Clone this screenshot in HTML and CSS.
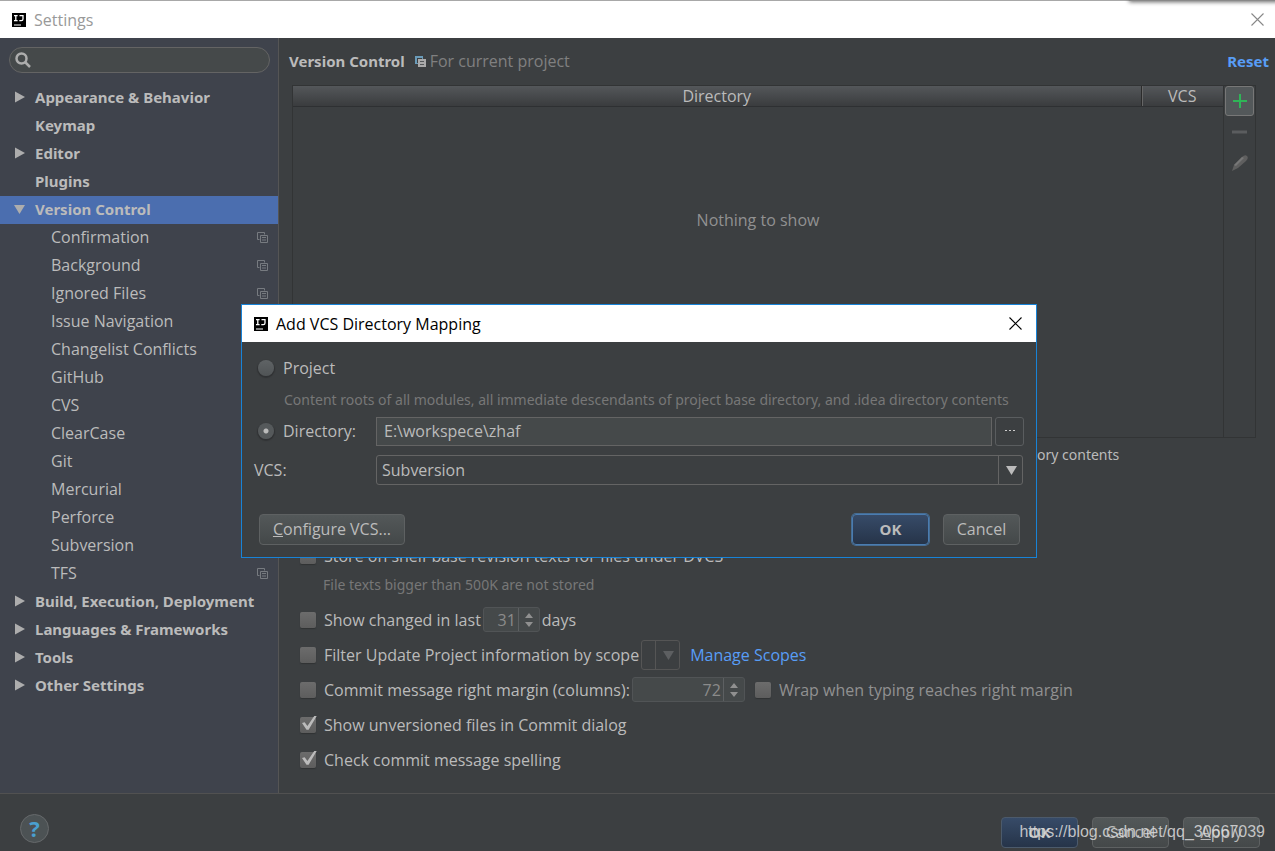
FILE: index.html
```html
<!DOCTYPE html>
<html lang="en">
<head>
<meta charset="utf-8">
<title>Settings</title>
<link rel="stylesheet" href="styles.css">
</head>
<body>
<svg class="defs" aria-hidden="true">
  <symbol id="logo" viewBox="0 0 14 14"><path fill="#000" d="M0 0h14v14H0z"/><path fill="none" stroke="#fff" stroke-width="1.3" d="M2 2.600h3.600M3.800 2.600v5M2 7.700h3.600M7.500 2.600h3.500v3.400q0 1.700-1.700 1.700H7.300"/><path fill="#fff" d="M2 11.500h7v1H2z"/></symbol>
  <symbol id="copy" viewBox="0 0 11 11"><path fill="none" stroke="currentColor" d="M2.500 7.500h-2v-7h7v2M3.500 3.500h7v7h-7zM5 5.500h4M5 8h4"/></symbol>
  <symbol id="close" viewBox="0 0 13 13"><path fill="none" stroke="currentColor" stroke-width="1.100" d="M.5.5l12 12M12.500.5l-12 12"/></symbol>
  <symbol id="right" viewBox="0 0 10 12"><path fill="currentColor" d="M0 .5v11L10 6z"/></symbol>
  <symbol id="down" viewBox="0 0 11 9"><path fill="currentColor" d="M0 0h11L5.500 9z"/></symbol>
  <symbol id="steps" viewBox="0 0 8 14"><path fill="currentColor" d="M4 0l4 5H0zM4 14l4-5H0z"/></symbol>
</svg>
<div class="window">
  <header class="titlebar">
    <svg class="logo"><use href="#logo"/></svg>
    <span class="title">Settings</span>
    <button class="close" aria-label="Close"><svg><use href="#close"/></svg></button>
    <span class="edge"></span>
  </header>
  <div class="content">
    <nav class="sidebar">
      <label class="search">
        <svg viewBox="0 0 16 16"><circle cx="6.500" cy="6.500" r="5"/><path d="M10 10l5 5"/></svg>
        <input type="text" aria-label="Search settings">
      </label>
      <ul class="tree">
        <li class="group"><svg class="arrow"><use href="#right"/></svg>Appearance &amp; Behavior</li>
        <li class="group">Keymap</li>
        <li class="group"><svg class="arrow"><use href="#right"/></svg>Editor</li>
        <li class="group">Plugins</li>
        <li class="group selected"><svg class="arrow open"><use href="#down"/></svg>Version Control</li>
        <li>Confirmation<svg class="copy"><use href="#copy"/></svg></li>
        <li>Background<svg class="copy"><use href="#copy"/></svg></li>
        <li>Ignored Files<svg class="copy"><use href="#copy"/></svg></li>
        <li>Issue Navigation</li>
        <li>Changelist Conflicts</li>
        <li>GitHub</li>
        <li>CVS</li>
        <li>ClearCase</li>
        <li>Git</li>
        <li>Mercurial</li>
        <li>Perforce</li>
        <li>Subversion</li>
        <li>TFS<svg class="copy"><use href="#copy"/></svg></li>
        <li class="group"><svg class="arrow"><use href="#right"/></svg>Build, Execution, Deployment</li>
        <li class="group"><svg class="arrow"><use href="#right"/></svg>Languages &amp; Frameworks</li>
        <li class="group"><svg class="arrow"><use href="#right"/></svg>Tools</li>
        <li class="group"><svg class="arrow"><use href="#right"/></svg>Other Settings</li>
      </ul>
    </nav>
    <main class="main">
      <div class="heading">
        <h1>Version Control</h1>
        <svg class="scope" viewBox="0 0 11 11"><path fill="#6a9bb8" d="M0 0h8v8H0z"/><path fill="#3c3f41" d="M2 2h5v5H2z"/><path fill="#aaa" d="M3 3h8v8H3z"/><path stroke="#55585a" d="M5 5.500h4M5 8.500h4"/></svg>
        <span class="muted">For current project</span>
        <a class="reset" href="#">Reset</a>
      </div>
      <div class="mappings">
        <div class="list">
          <table>
            <thead><tr><th>Directory</th><th class="vcs">VCS</th></tr></thead>
          </table>
          <p class="empty">Nothing to show</p>
        </div>
        <div class="tools">
          <button class="add" aria-label="Add"><svg viewBox="0 0 16 16"><path stroke="#2fb457" stroke-width="2" d="M8 1v14M1 8h14"/></svg></button>
          <button aria-label="Remove"><svg viewBox="0 0 16 16"><path stroke="#5b5d5f" stroke-width="3" d="M0 8h15"/></svg></button>
          <button aria-label="Edit"><svg viewBox="0 0 16 16"><path fill="#5f5f5f" d="M0 16l2-6 8-8q3-3 5-1t-1 5l-8 7z"/><path fill="#777" d="M2 10l8-8 2 1-8 8z"/></svg></button>
        </div>
      </div>
      <p class="note">&lt;Project&gt; - Content roots of all modules, all immediate descendants of project base directory, and .idea directory contents</p>
      <div class="options">
        <div class="option"><label><input type="checkbox">Store on shelf base revision texts for files under DVCS</label></div>
        <p class="hint">File texts bigger than 500K are not stored</p>
        <div class="option"><label><input type="checkbox">Show changed in last</label>
          <span class="spinner"><input type="number" value="31" aria-label="Days" disabled><svg><use href="#steps"/></svg></span><span>days</span></div>
        <div class="option"><label><input type="checkbox">Filter Update Project information by scope</label>
          <span class="combo mini"><select aria-label="Scope" disabled><option></option></select><svg><use href="#down"/></svg></span>
          <a class="manage" href="#">Manage Scopes</a></div>
        <div class="option"><label><input type="checkbox">Commit message right margin (columns):</label>
          <span class="spinner wide"><input type="number" value="72" aria-label="Right margin columns" disabled><svg><use href="#steps"/></svg></span>
          <label class="wrap"><input type="checkbox" disabled>Wrap when typing reaches right margin</label></div>
        <div class="option"><label><input type="checkbox" checked>Show unversioned files in Commit dialog</label></div>
        <div class="option"><label><input type="checkbox" checked>Check commit message spelling</label></div>
      </div>
    </main>
  </div>
  <footer class="footer">
    <button class="help" aria-label="Help">?</button>
    <button class="btn primary">OK</button>
    <button class="btn">Cancel</button>
    <button class="btn"><u>A</u>pply</button>
    <span class="watermark">https://blog.csdn.net/qq_30667039</span>
  </footer>

  <section class="dialog" role="dialog" aria-labelledby="dialog-title">
    <header class="titlebar">
      <svg class="logo"><use href="#logo"/></svg>
      <span class="title" id="dialog-title">Add VCS Directory Mapping</span>
      <button class="close" aria-label="Close"><svg><use href="#close"/></svg></button>
    </header>
    <form class="form">
      <label class="choice"><input type="radio" name="target">Project</label>
      <p class="roots">Content roots of all modules, all immediate descendants of project base directory, and .idea directory contents</p>
      <div class="field">
        <label class="choice"><input type="radio" name="target" checked>Directory:</label>
        <input class="path" type="text" value="E:\workspece\zhaf" aria-label="Directory path">
        <button class="browse" type="button" aria-label="Browse"><svg viewBox="0 0 10 2"><path fill="#ccc" d="M0 0h2v1H0zM4 0h2v1H4zM8 0h2v1H8z"/></svg></button>
      </div>
      <div class="field vcs-field">
        <label for="vcs">VCS:</label>
        <span class="combo"><select id="vcs"><option>Subversion</option></select><svg><use href="#down"/></svg></span>
      </div>
      <div class="actions">
        <button class="btn configure" type="button"><u>C</u>onfigure VCS...</button>
        <button class="btn primary focused" type="button">OK</button>
        <button class="btn" type="button">Cancel</button>
      </div>
    </form>
  </section>
</div>
</body>
</html>
```

FILE: styles.css
```css
* { box-sizing: border-box; }

body {
  margin: 0;
  background: #3c3f41;
  color: #bbb;
  font: 16px/20px "Open Sans", "Noto Sans", sans-serif;
}

h1, p, ul { margin: 0; padding: 0; }
h1 { font: 700 15px/20px "Noto Sans", sans-serif; }
button, input, select { font: inherit; color: inherit; margin: 0; }
button { padding: 0; border: 0; background: none; }
a { color: #589df6; text-decoration: none; }
svg { display: block; flex: none; }
.defs { display: none; }

.window {
  position: relative;
  display: flex;
  flex-direction: column;
  min-height: 100vh;
  overflow: hidden;
}

.titlebar {
  position: relative;
  display: flex;
  align-items: center;
  height: 38px;
  padding: 0 11px 0 12px;
  border-top: 1px solid #a8a8a8;
  background: #fff;
  color: #999;
}
.logo { width: 14px; height: 14px; }
.title { margin-left: 8px; }
.close { margin-left: auto; color: #888; }
.close svg { width: 13px; height: 13px; }
.edge {
  position: absolute;
  top: -6px;
  right: -8px;
  width: 154px;
  height: 6px;
  background: #888;
  box-shadow: 0 1px 4px #666;
}

.content { display: flex; flex: 1; }

.sidebar {
  width: 279px;
  flex: none;
  border-right: 1px solid #555;
  background: #3f434c;
}
.search {
  display: flex;
  align-items: center;
  height: 26px;
  margin: 9px 8px 11px 9px;
  padding: 0 5px;
  border: 1px solid #646464;
  border-radius: 13px;
  background: #45494a;
}
.search svg { width: 16px; height: 16px; fill: none; stroke: #adadad; stroke-width: 2.5; }
.search input { flex: 1; min-width: 0; border: 0; background: none; outline: 0; }

.tree { list-style: none; }
.tree li {
  position: relative;
  display: flex;
  align-items: center;
  height: 28px;
  padding: 0 0 2px 51px;
}
.tree .group { padding-left: 35px; font: 700 15px/20px "Noto Sans", sans-serif; }
.tree .selected { background: #4b6eaf; }
.arrow { position: absolute; left: 15px; width: 10px; height: 12px; color: #adadad; }
.arrow.open { left: 14px; width: 11px; height: 9px; }
.copy { width: 11px; height: 11px; margin: 0 10px 0 auto; color: #777b80; }

.main { flex: 1; min-width: 0; padding: 0 6px 0 10px; }
.heading { display: flex; align-items: center; height: 46px; margin-bottom: 1px; }
.scope { width: 11px; height: 11px; margin: 0 4px 0 10px; }
.muted { color: #808080; }
.reset { margin-left: auto; font: 700 15px/20px "Noto Sans", sans-serif; }

.mappings {
  display: flex;
  height: 353px;
  margin: 0 13px 0 3px;
  border: 1px solid #323435;
}
.list { flex: 1; }
.list table { width: 100%; border-collapse: collapse; }
.list th {
  height: 20px;
  padding: 0;
  border-bottom: 1px solid #2e3032;
  background: linear-gradient(#54575a, #3a3c3e);
  font-weight: 400;
}
.list .vcs { width: 82px; border-left: 1px solid #2b2b2b; box-shadow: inset 1px 0 #666; }
.empty { padding-top: 103px; text-align: center; color: #919191; }
.tools {
  display: flex;
  flex-direction: column;
  align-items: center;
  width: 32px;
  border-left: 1px solid #323435;
}
.tools button { display: grid; place-items: center; width: 29px; height: 31px; }
.tools svg { width: 16px; height: 16px; }
.tools .add { height: 30px; border: 1px solid #777; border-radius: 3px; background: #53585a; }

.note {
  padding: 7px 0 0 32px;
  font-family: "Noto Sans", sans-serif;
  font-size: 14px;
  white-space: nowrap;
}
.options { padding: 73px 0 0 11px; }
.option { display: flex; align-items: center; height: 35px; white-space: nowrap; }
.option label { display: flex; align-items: center; gap: 8px; }
.options .hint {
  padding: 2px 0 7px 23px;
  font-family: "Noto Sans", sans-serif;
  font-size: 14px;
  color: #777;
}

input[type="checkbox"] {
  appearance: none;
  position: relative;
  width: 16px;
  height: 16px;
  border-radius: 2px;
  background: linear-gradient(#6c6c6c, #5d5d5d);
  box-shadow: 0 1px 1px #303234;
}
input[type="checkbox"]:checked::before {
  content: "";
  position: absolute;
  top: -1px;
  left: 2px;
  width: 15px;
  height: 15px;
  background: #bbb;
  clip-path: polygon(0 50%, 18% 45%, 36% 70%, 84% 0, 100% 0, 44% 95%, 30% 95%);
}

input::-webkit-inner-spin-button { display: none; }
.spinner {
  display: flex;
  align-items: center;
  width: 57px;
  height: 25px;
  margin: 0 2px;
  border: 1px solid #515456;
  border-radius: 3px;
  background: #45494a;
  color: #8b8b8b;
}
.spinner input {
  appearance: textfield;
  width: 35px;
  height: 23px;
  padding: 0 2px 0 0;
  border: 0;
  border-right: 1px solid #5d6062;
  background: none;
  text-align: right;
}
.spinner svg { width: 8px; height: 14px; margin: auto; color: #909090; }
.spinner.wide { width: 113px; margin-right: 10px; }
.spinner.wide input { width: 91px; }
.wrap { color: #919191; }

.combo { position: relative; display: flex; flex: 1; }
.combo select {
  appearance: none;
  width: 100%;
  height: 30px;
  padding: 0 26px 0 5px;
  border: 1px solid #646464;
  border-radius: 3px;
  background: linear-gradient(#646464, #646464) right 23px top / 1px 100% no-repeat;
}
.combo svg { position: absolute; top: 11px; right: 6px; width: 11px; height: 9px; color: #bbb; pointer-events: none; }
.combo.mini { flex: none; width: 39px; margin-left: 2px; }
.combo.mini select { border-color: #555; background-image: linear-gradient(#555, #555); opacity: 1; }
.combo.mini svg { color: #5d5f61; }
.manage { margin-left: 10px; }

.footer {
  position: relative;
  display: flex;
  align-items: center;
  gap: 14px;
  height: 58px;
  padding: 20px 15px 0 20px;
  border-top: 1px solid #515151;
}
.help {
  width: 29px;
  height: 29px;
  margin: -9px auto 0 0;
  border: 1px solid #66696b;
  border-radius: 50%;
  background: #4c5254;
  color: #4a9fcf;
  font-size: 22px;
  line-height: 24px;
  font-weight: 700;
}
.btn {
  width: 77px;
  height: 31px;
  padding-bottom: 1px;
  border: 1px solid #5e6162;
  border-radius: 4px;
  background: linear-gradient(#535859, #444849);
}
.btn.primary {
  border-color: #4c5a6b;
  background: linear-gradient(#374b68, #263449);
  font: 700 15px/20px "Noto Sans", sans-serif;
}
.btn.focused { border-color: #4a7cb0; box-shadow: 0 0 0 1px #466d94; }
.watermark {
  position: absolute;
  right: 10px;
  bottom: 9px;
  font: 16px/20px "Liberation Sans", Arial, sans-serif;
  color: rgba(220, 220, 220, 0.85);
}

/* Dialog floating over the settings window */
.dialog {
  position: absolute;
  top: 304px;
  left: 241px;
  width: 796px;
  border: 1px solid #1883d7;
  background: #3c3f41;
}
.dialog .titlebar { height: 37px; padding-right: 14px; border: 0; color: #000; }
.dialog .close { color: #000; }
.form { padding: 16px 12px 12px; }
.choice { display: flex; align-items: center; gap: 9px; padding-left: 4px; }
input[type="radio"] {
  appearance: none;
  width: 16px;
  height: 16px;
  border-radius: 50%;
  background: linear-gradient(#5f6365, #505456);
  box-shadow: 0 1px 1px 1px #303234;
}
input[type="radio"]:checked { background: radial-gradient(circle, #bbb 0 2px, #55595b 3px); }
.roots {
  padding: 12px 0 6px 30px;
  font-family: "Noto Sans", sans-serif;
  font-size: 14px;
  white-space: nowrap;
  color: #777;
}
.field { display: flex; align-items: center; height: 30px; }
.field > label { width: 122px; flex: none; }
.path {
  flex: 1;
  min-width: 0;
  height: 29px;
  padding: 0 7px;
  border: 1px solid #646464;
  background: #45494a;
}
.browse {
  display: grid;
  place-items: center;
  width: 29px;
  height: 29px;
  margin-left: 3px;
  border: 1px solid #5a5d5f;
  border-radius: 3px;
}
.browse svg { width: 10px; height: 2px; }
.vcs-field { margin-top: 9px; padding-right: 1px; }
.actions { display: flex; gap: 14px; padding: 29px 4px 0 5px; }
.configure { width: 146px; margin-right: auto; }
```
